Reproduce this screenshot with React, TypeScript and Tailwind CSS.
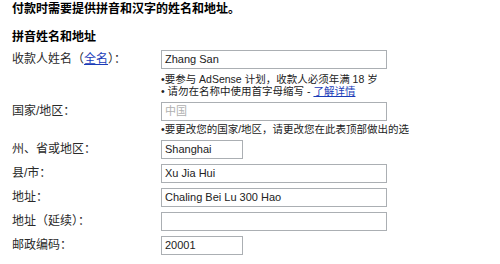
import React from "react";

const font = { fontFamily: '"Liberation Sans", "Noto Sans CJK SC", sans-serif' };

type RowProps = {
  label: React.ReactNode;
  children: React.ReactNode;
  className?: string;
};

function Row({ label, children, className = "" }: RowProps) {
  return (
    <div className={`grid grid-cols-[149px_248px] ${className}`}>
      <div className="h-[19px] flex items-center text-[12px] text-[#2a2a2a] -mt-[1px]">{label}</div>
      <div className="overflow-hidden">{children}</div>
    </div>
  );
}

function Field({ value = "", wide = true, disabled = false }: { value?: string; wide?: boolean; disabled?: boolean }) {
  return (
    <div
      className={`h-[19px] border border-[#abafb3] bg-white flex items-center pl-[3px] text-[11px] ${
        wide ? "w-[226px]" : "w-[82px]"
      } ${disabled ? "text-[#b0b0b0]" : "text-[#222]"}`}
    >
      {value}
    </div>
  );
}

export default function App() {
  return (
    <div className="w-[500px] h-[264px] overflow-hidden bg-white pl-3 pt-[1px] whitespace-nowrap" style={font}>
      <p className="h-[16px] leading-[16px] text-[12px] font-bold text-black">付款时需要提供拼音和汉字的姓名和地址。</p>
      <p className="mt-[12px] h-[16px] leading-[16px] text-[12px] font-bold text-black">拼音姓名和地址</p>

      <Row
        className="mt-[5px]"
        label={
          <span>
            收款人姓名（<a className="text-[#1a3cb8] underline">全名</a>）：
          </span>
        }
      >
        <Field value="Zhang San" />
        <div className="mt-[5px] h-[11px] text-[10.5px] leading-[11px] text-[#222]">
          •要参与 AdSense 计划，收款人必须年满 18 岁
        </div>
        <div className="h-[12px] text-[10.5px] leading-[12px] text-[#222]">
          • 请勿在名称中使用首字母缩写 - <a className="text-[#1a3cb8] underline">了解详情</a>
        </div>
      </Row>

      <Row className="mt-[5px]" label="国家/地区：">
        <Field value="中国" disabled />
        <div className="mt-[2px] h-[12px] text-[10.5px] leading-[12px] text-[#222]">
          •要更改您的国家/地区，请更改您在此表顶部做出的选择。
        </div>
      </Row>

      <div className="mt-[5px] flex flex-col gap-[5px]">
        <Row label="州、省或地区：">
          <Field value="Shanghai" wide={false} />
        </Row>
        <Row label="县/市：">
          <Field value="Xu Jia Hui" />
        </Row>
        <Row label="地址：">
          <Field value="Chaling Bei Lu 300 Hao" />
        </Row>
        <Row label="地址（延续）：">
          <Field />
        </Row>
        <Row label="邮政编码：">
          <Field value="20001" wide={false} />
        </Row>
      </div>
    </div>
  );
}
